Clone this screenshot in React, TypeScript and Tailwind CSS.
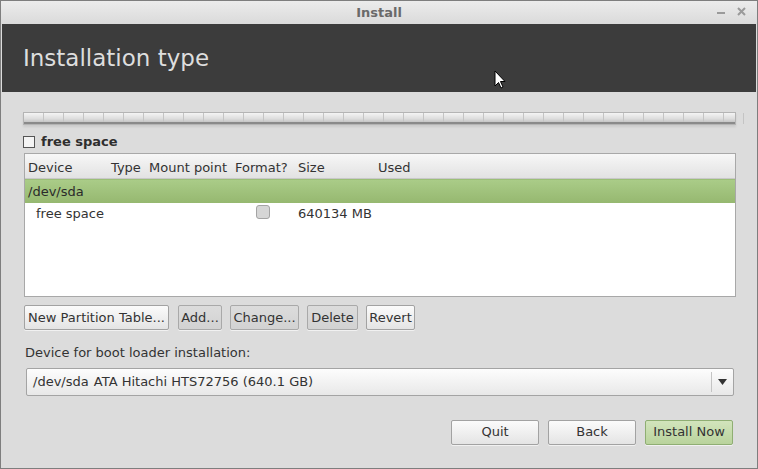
import React from "react";

const font = { fontFamily: '"DejaVu Sans", "Liberation Sans", sans-serif' };

function Btn({ children, w, variant = "light", cls2 = "" }: { children: React.ReactNode; w: string; variant?: "light" | "flat" | "green"; cls2?: string }) {
  const cls =
    variant === "green"
      ? "bg-gradient-to-b from-[#d2e4bc] to-[#b9d39c] border-[#8fae73]"
      : variant === "flat"
      ? "bg-gradient-to-b from-[#dcdcdc] to-[#d2d2d2] border-[#a9a9a9]"
      : "bg-gradient-to-b from-[#fbfbfb] to-[#e4e4e4] border-[#a2a2a2]";
  return (
    <div className={`${w} ${cls2} h-[25px] flex items-center justify-center border rounded-[2px] text-[13px] text-[#333] shadow-[0_1px_0_rgba(255,255,255,0.6)] ${cls}`}>
      {children}
    </div>
  );
}

export default function App() {
  const ticks = Array.from({ length: 36 });
  return (
    <div style={font} className="w-[758px] h-[469px] bg-[#dcdcdc] border border-[#7e7e7e] flex flex-col relative overflow-hidden">
      {/* title bar */}
      <div className="h-[23px] bg-gradient-to-b from-[#ececec] to-[#dadada] flex items-center justify-center relative">
        <span className="text-[13px] font-bold text-[#6a6a6a]">Install</span>
        <div className="absolute right-[11px] top-[6px] flex items-center gap-[12px] text-[#a0a0a0]">
          <div className="w-[8px] h-[2px] bg-[#9a9a9a] mt-[2px]" />
          <svg width="9" height="9" viewBox="0 0 9 9"><path d="M1 1L8 8M8 1L1 8" stroke="#9a9a9a" strokeWidth="2" /></svg>
        </div>
      </div>
      {/* header */}
      <div className="mx-[1px] h-[68px] bg-[#3c3c3c] flex items-center pl-[21px]">
        <span className="text-[23px] text-[#dedede] mt-[1px]">Installation type</span>
      </div>
      {/* body */}
      <div className="flex-1 px-[22px] pt-[20px] flex flex-col">
        {/* partition bar */}
        <div className="w-[713px] h-[13px] relative border border-[#b4b4b4] bg-gradient-to-b from-[#f4f4f4] via-[#dedede] to-[#b8b8b8] flex shadow-[0_2px_2px_rgba(0,0,0,0.08)]">
          {ticks.map((_, i) => (
            <div key={i} className="w-[20px] h-full border-r border-[#c4c4c4] shrink-0" />
          ))}
          <div className="absolute left-0 right-0 bottom-0 h-[2px] bg-[#8a8a8a]" />
        </div>
        {/* free space legend */}
        <div className="flex items-center mt-[10px] h-[14px]">
          <div className="w-[12px] h-[12px] border border-[#555] bg-[#f4f4f4]" />
          <span className="ml-[6px] text-[13px] font-bold text-[#2e2e2e]">free space</span>
        </div>
        {/* table */}
        <div className="mt-[4px] ml-[1px] w-[712px] h-[144px] border border-[#a8a8a8] bg-white flex flex-col text-[13px] text-[#333]">
          <div className="h-[25px] bg-gradient-to-b from-[#f7f7f7] to-[#e2e2e2] border-b border-[#c8c8c8] relative">
            <span className="absolute left-[3px] top-[4px]">Device</span>
            <span className="absolute left-[86px] top-[4px]">Type</span>
            <span className="absolute left-[124px] top-[4px]">Mount point</span>
            <span className="absolute left-[210px] top-[4px]">Format?</span>
            <span className="absolute left-[273px] top-[4px]">Size</span>
            <span className="absolute left-[353px] top-[4px]">Used</span>
          </div>
          <div className="h-[24px] bg-gradient-to-b from-[#aacc88] to-[#96b870] border-t border-[#9cbf78] flex items-center pl-[3px] text-[#2a2a2a]">
            /dev/sda
          </div>
          <div className="h-[20px] relative">
            <span className="absolute left-[11px] top-[1px]">free space</span>
            <div className="absolute left-[231px] top-[2px] w-[14px] h-[14px] rounded-[3px] border border-[#a4a4a4] bg-[#d6d6d6]" />
            <span className="absolute left-[273px] top-[1px]">640134 MB</span>
          </div>
        </div>
        {/* buttons */}
        <div className="flex mt-[8px] ml-[1px] gap-[8px]">
          <Btn w="w-[145px]">New Partition Table...</Btn>
          <Btn w="w-[44px]" variant="flat" cls2="ml-[1px]">Add...</Btn>
          <Btn w="w-[69px]" variant="flat">Change...</Btn>
          <Btn w="w-[51px]" variant="flat">Delete</Btn>
          <Btn w="w-[49px]">Revert</Btn>
        </div>
        <div className="mt-[13px] ml-[2px] text-[13px] text-[#333]">Device for boot loader installation:</div>
        {/* combo */}
        <div className="mt-[5px] ml-[3px] w-[708px] h-[28px] border border-[#a4a4a4] rounded-[2px] bg-gradient-to-b from-[#fdfdfd] to-[#e8e8e8] flex items-center text-[13px] text-[#333]">
          <span className="flex-1 pl-[6px]">/dev/sda <span className="ml-[1px]">ATA Hitachi HTS72756 (640.1 GB)</span></span>
          <div className="w-[1px] h-[20px] bg-[#c4c4c4]" />
          <div className="w-[21px] flex justify-center">
            <svg width="9" height="6" viewBox="0 0 9 6"><path d="M0 0H9L4.5 6Z" fill="#333" /></svg>
          </div>
        </div>
        {/* bottom buttons */}
        <div className="flex justify-end gap-[9px] mt-[24px] mr-[2px]">
          <Btn w="w-[88px]">Quit</Btn>
          <Btn w="w-[88px]">Back</Btn>
          <Btn w="w-[88px]" variant="green">Install Now</Btn>
        </div>
      </div>
      {/* cursor */}
      <svg className="absolute left-[493px] top-[69px]" width="12" height="19" viewBox="0 0 12 19">
        <path d="M1 1V16L4.5 12.5L7 18L9 17L6.5 11.5H11Z" fill="#fff" stroke="#000" strokeWidth="1" />
      </svg>
    </div>
  );
}
